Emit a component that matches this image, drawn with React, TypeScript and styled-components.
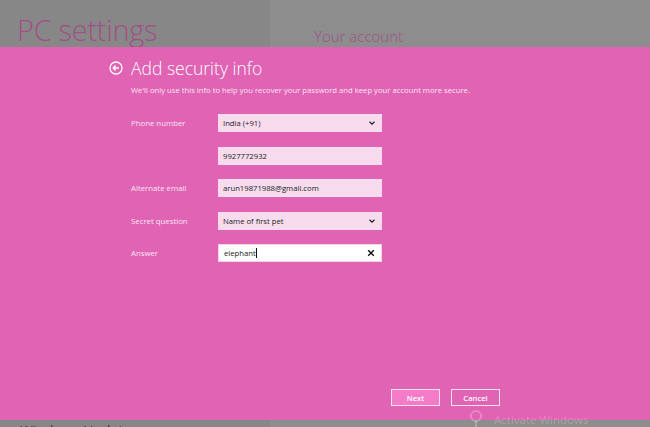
import React from "react";
import styled, { createGlobalStyle } from "styled-components";

const Global = createGlobalStyle`
  html, body { margin: 0; padding: 0; background: #e063b4; }
  body { font-family: "Open Sans", "Noto Sans", sans-serif; }
  * { box-sizing: border-box; }
`;

const Screen = styled.div`
  width: 650px;
  height: 427px;
  display: flex;
  flex-direction: column;
  position: relative;
  overflow: hidden;
`;

const Header = styled.div`
  height: 47px;
  display: grid;
  grid-template-columns: 270px 1fr;
  flex: none;
`;

const HeaderPane = styled.div<{ $tone: string }>`
  background: ${(p) => p.$tone};
  display: flex;
  align-items: flex-end;
  overflow: hidden;
`;

const AppTitle = styled.div`
  font-family: "Open Sans", sans-serif;
  font-weight: 300;
  font-size: 29px;
  line-height: 34px;
  color: #a24f87;
  padding-left: 17px;
  letter-spacing: -0.3px;
  margin-bottom: 0;
`;

const PageTitle = styled.div`
  font-family: "Open Sans", sans-serif;
  font-weight: 300;
  font-size: 15px;
  line-height: 15px;
  color: #a24f87;
  padding-left: 44px;
  margin-bottom: 3px;
`;

const Dialog = styled.div`
  flex: 1;
  background: #e063b4;
  display: flex;
  flex-direction: column;
  padding: 13px 150px 14px 110px;
  color: #fff;
`;

const TitleRow = styled.div`
  display: flex;
  align-items: center;
  gap: 8px;
  height: 16px;
`;

const BackCircle = styled.svg`
  width: 14px;
  height: 14px;
  flex: none;
  margin-left: -1px;
`;

const Title = styled.h1`
  margin: 0;
  font-family: "Open Sans", sans-serif;
  font-weight: 300;
  font-size: 17.5px;
  line-height: 16px;
  color: #fff;
`;

const Subtitle = styled.p`
  margin: 9px 0 0 21px;
  font-size: 7.7px;
  line-height: 10px;
  color: #fbe6f3;
`;

const Form = styled.div`
  margin: 19px 0 0 21px;
  display: grid;
  grid-template-columns: 87px 164px;
  grid-auto-rows: 18px;
  row-gap: 14.5px;
  align-items: center;
`;

const Label = styled.div`
  font-size: 7.8px;
  color: #fbe6f3;
  line-height: 18px;
`;

const Field = styled.div<{ $active?: boolean }>`
  height: 18px;
  display: flex;
  align-items: center;
  padding: 0 6px 0 5px;
  background: ${(p) => (p.$active ? "#ffffff" : "#f8dcee")};
  border: ${(p) => (p.$active ? "1px solid #f3d3e8" : "none")};
  font-size: 7.7px;
  color: #222;
`;

const FieldText = styled.span`
  flex: 1;
  white-space: nowrap;
`;

const Caret = styled.span`
  display: inline-block;
  width: 1px;
  height: 10px;
  background: #111;
  vertical-align: middle;
  margin-left: 0.5px;
`;

const Icon = styled.svg`
  width: 8px;
  height: 8px;
  flex: none;
`;

const Actions = styled.div`
  margin-top: auto;
  display: flex;
  justify-content: flex-end;
  gap: 11px;
`;

const Button = styled.button<{ $primary?: boolean }>`
  width: 49px;
  height: 17px;
  border: 1px solid #fbe3f2;
  background: ${(p) => (p.$primary ? "#f57bc8" : "#e063b4")};
  color: #fff;
  font-family: "Open Sans", sans-serif;
  font-size: 7.6px;
  font-weight: 600;
  padding: 0;
  cursor: pointer;
`;

const Footer = styled.div`
  height: 7px;
  display: grid;
  grid-template-columns: 270px 1fr;
  flex: none;
`;

const FooterPane = styled.div<{ $tone: string }>`
  background: ${(p) => p.$tone};
  overflow: hidden;
`;

const FooterText = styled.div`
  font-family: "Open Sans", sans-serif;
  font-size: 14px;
  color: #3a3a3a;
  padding: 4px 0 0 20px;
  line-height: 14px;
`;

const Watermark = styled.div`
  position: absolute;
  left: 468px;
  top: 410px;
  display: flex;
  align-items: center;
  gap: 10px;
  color: rgba(255, 255, 255, 0.22);
  font-family: "Open Sans", sans-serif;
  font-size: 11.5px;
  pointer-events: none;
`;

const Chevron = () => (
  <Icon viewBox="0 0 8 8">
    <path d="M1.5 2.8 L4 5.2 L6.5 2.8" fill="none" stroke="#222" strokeWidth="1.3" />
  </Icon>
);

const Clear = () => (
  <Icon viewBox="0 0 8 8">
    <path d="M1.2 1.2 L6.8 6.8 M6.8 1.2 L1.2 6.8" fill="none" stroke="#111" strokeWidth="1.4" />
  </Icon>
);

export default function App() {
  return (
    <>
      <Global />
      <Screen>
        <Header>
          <HeaderPane $tone="#878787">
            <AppTitle>PC settings</AppTitle>
          </HeaderPane>
          <HeaderPane $tone="#8d8d8d">
            <PageTitle>Your account</PageTitle>
          </HeaderPane>
        </Header>
        <Dialog>
          <TitleRow>
            <BackCircle viewBox="0 0 14 14">
              <circle cx="7" cy="7" r="6" fill="none" stroke="#fff" strokeWidth="1.3" />
              <path d="M10 7 H4.3 M6.6 4.6 L4.2 7 L6.6 9.4" fill="none" stroke="#fff" strokeWidth="1.4" />
            </BackCircle>
            <Title>Add security info</Title>
          </TitleRow>
          <Subtitle>
            We'll only use this info to help you recover your password and keep your account more secure.
          </Subtitle>
          <Form>
            <Label>Phone number</Label>
            <Field>
              <FieldText>India (+91)</FieldText>
              <Chevron />
            </Field>
            <Label />
            <Field>
              <FieldText>9927772932</FieldText>
            </Field>
            <Label>Alternate email</Label>
            <Field>
              <FieldText>arun19871988@gmail.com</FieldText>
            </Field>
            <Label>Secret question</Label>
            <Field>
              <FieldText>Name of first pet</FieldText>
              <Chevron />
            </Field>
            <Label>Answer</Label>
            <Field $active>
              <FieldText>
                elephant
                <Caret />
              </FieldText>
              <Clear />
            </Field>
          </Form>
          <Actions>
            <Button $primary>Next</Button>
            <Button>Cancel</Button>
          </Actions>
        </Dialog>
        <Footer>
          <FooterPane $tone="#878787">
            <FooterText>Windows Update</FooterText>
          </FooterPane>
          <FooterPane $tone="#8d8d8d" />
        </Footer>
        <Watermark>
          <svg width="16" height="18" viewBox="0 0 16 18">
            <circle cx="8" cy="6" r="5" fill="none" stroke="rgba(255,255,255,0.25)" strokeWidth="2" />
            <path d="M8 11 V18" stroke="rgba(255,255,255,0.25)" strokeWidth="2" />
          </svg>
          <span>Activate Windows</span>
        </Watermark>
      </Screen>
    </>
  );
}
